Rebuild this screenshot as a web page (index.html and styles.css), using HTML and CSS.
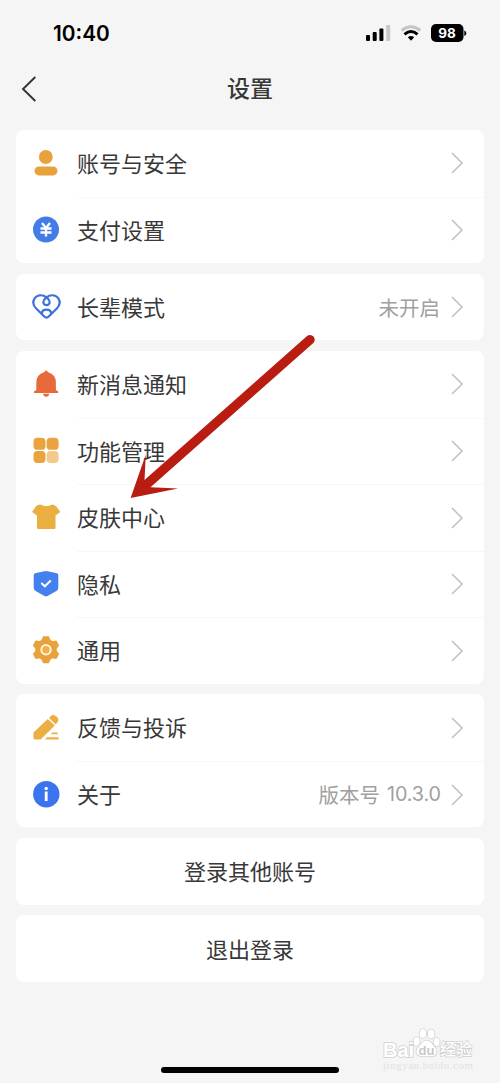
FILE: index.html
```html
<!DOCTYPE html>
<html lang="zh-CN">
<head>
<meta charset="utf-8">
<title>设置</title>
<link rel="stylesheet" href="styles.css">
</head>
<body>
<svg class="defs" width="0" height="0"><symbol id="chev" viewBox="0 0 14 24"><path d="M2 2l10 10L2 22" fill="none" stroke="#c0c0c0" stroke-width="1.5"/></symbol></svg>
<div class="screen">
<header class="status">
  <span class="time">10:40</span>
  <svg class="signals" width="102" height="20" viewBox="0 0 102 20">
    <rect x="1" y="11" width="4" height="6" rx="1"/><rect x="7.7" y="8" width="4" height="9" rx="1"/><rect x="14.4" y="4.5" width="4" height="12.5" rx="1"/><rect x="21.2" y="1" width="4" height="16" rx="1" fill="#c8c8c8"/>
    <path d="M36.700 6.500Q46 -1 55.300 6.500" fill="none" stroke="#c4c4c4" stroke-width="3"/>
    <path d="M39.500 10.400Q46 4.600 52.500 10.400" fill="none" stroke="#000" stroke-width="3"/>
    <path d="M42.800 13.300Q46 10.600 49.200 13.300L46 16.800Z"/>
    <rect x="66" y="0" width="32.500" height="18" rx="5"/><path d="M99.300 6.500q2 .5 2 2.700t-2 2.700z"/>
    <text x="82" y="14.200" class="battery">98</text>
  </svg>
</header>
<nav class="nav">
  <svg class="back" width="16" height="26" viewBox="0 0 16 26"><path d="M14.300 1L2 13l12.300 12" fill="none" stroke="#333" stroke-width="1.9"/></svg>
  <h1 class="title">设置</h1>
</nav>
<main class="cards">
  <section class="card">
    <div class="row">
      <svg class="icon" viewBox="0 0 28 28"><g fill="#e9a23b"><circle cx="13.800" cy="8" r="6.900"/><rect x="2.500" y="17.400" width="23" height="9" rx="4.400"/></g></svg>
      <div class="body"><span class="label">账号与安全</span><svg class="chev"><use href="#chev"/></svg></div>
    </div>
    <div class="row">
      <svg class="icon" viewBox="0 0 28 28"><circle cx="14" cy="13.500" r="13" fill="#437ce8"/><path d="M10 7l4 5 4-5M8.500 12.500h11M8.500 16.500h11M14 12v8.500" fill="none" stroke="#fff" stroke-width="2.300"/></svg>
      <div class="body"><span class="label">支付设置</span><svg class="chev"><use href="#chev"/></svg></div>
    </div>
  </section>
  <section class="card">
    <div class="row">
      <svg class="icon" viewBox="0 0 28 28"><g transform="translate(0 .6)" fill="none" stroke="#3b73d8" stroke-width="2.200"><path d="M14.500 3.800C11 .8 5.500.8 2.800 4.500.2 8.300 1.300 12 4.200 15l7.800 7.700q2.500 2.500 5 0l7.800-7.700c2.900-3 4-6.700 1.400-10.500C23.500.8 18 .8 14.500 3.800z"/><path d="M14.500 3.800C12.600 5.500 11.300 6.400 11.300 8.300a3.200 3.200 0 0 0 6.400 0c0-1.900-1.300-2.800-3.200-4.500zM9.700 20.400q.2-4.400 4.800-4.400t4.800 4.400"/></g></svg>
      <div class="body"><span class="label">长辈模式</span><span class="value">未开启</span><svg class="chev"><use href="#chev"/></svg></div>
    </div>
  </section>
  <section class="card">
    <div class="row">
      <svg class="icon" viewBox="0 0 28 28"><path d="M12 2.200q2-3.500 4.200 0 7.500 2.200 7.700 10V20l2.300 1.600v1.300H2v-1.300L4.300 20v-7.800Q4.500 4.400 12 2.200zM11 23.800h6.300q-.6 3-3.150 3T11 23.800z" fill="#e86a3a"/></svg>
      <div class="body"><span class="label">新消息通知</span><svg class="chev"><use href="#chev"/></svg></div>
    </div>
    <div class="row">
      <svg class="icon" viewBox="0 0 28 28"><g fill="#e9a33f"><rect x="1.500" y=".8" width="12" height="12" rx="3.900"/><rect x="14.600" y=".8" width="12" height="12" rx="3.900"/><rect x="1.500" y="13.900" width="12" height="12" rx="3.900"/><rect x="14.600" y="13.900" width="12" height="12" rx="3.900" fill="#f4c98a"/></g></svg>
      <div class="body"><span class="label">功能管理</span><svg class="chev"><use href="#chev"/></svg></div>
    </div>
    <div class="row">
      <svg class="icon" viewBox="0 0 28 28"><path d="M8.500 1.500Q14.500 5 20 1.500q3 .2 4.800 2.500l3.500 5-4.800 3.400V25q0 1-1 1H6q-1 0-1-1V12.400L0 9l3.600-5.200Q5.500 1.500 8.500 1.500z" fill="#ebae40"/></svg>
      <div class="body"><span class="label">皮肤中心</span><svg class="chev"><use href="#chev"/></svg></div>
    </div>
    <div class="row">
      <svg class="icon" viewBox="0 0 28 28"><path d="M12.500 1.300q1.500-.5 3 0L25 3.300q1.300.4 1.300 1.800v12.700q0 2.200-1.900 3.300L15.500 26q-1.500.8-3 0l-8.900-4.900q-1.900-1.100-1.900-3.300V5.100q0-1.400 1.300-1.800z" fill="#4480f0"/><path d="M9.300 13l3.500 3.300 6-5.800" fill="none" stroke="#fff" stroke-width="2"/></svg>
      <div class="body"><span class="label">隐私</span><svg class="chev"><use href="#chev"/></svg></div>
    </div>
    <div class="row">
      <svg class="icon" viewBox="0 0 28 28"><path d="M11.500 1h5l1.400 3.500 2.500 1.500 3.700-.7 2.200 4.200-2.300 2.800v2.900l2.300 2.800-2.200 4.200-3.700-.7-2.500 1.500-1.400 3.500h-5l-1.400-3.500-2.500-1.500-3.700.7-2.200-4.200L4 15.200v-2.900L1.700 9.500l2.200-4.200 3.700.7 2.500-1.500z" fill="#e9a23b" stroke="#e9a23b" stroke-width="1.500" stroke-linejoin="round"/><circle cx="14" cy="13.700" r="4.700" fill="#efb04b" stroke="#fff3dc" stroke-width="2"/></svg>
      <div class="body"><span class="label">通用</span><svg class="chev"><use href="#chev"/></svg></div>
    </div>
  </section>
  <section class="card">
    <div class="row">
      <svg class="icon" viewBox="0 0 28 28"><g fill="#ebaf44"><path d="M15.800 5l7 6.500L8.500 25.400H3q-1.500 0-1.500-1.500V18.500zM17 3.900l1.900-2q2.500-2.200 5.700.7t.7 6l-1.700 1.800z"/><path d="M20.500 18.500h5.200v1.800H18.800zM15 23.300h11.500v2.200H13z"/></g></svg>
      <div class="body"><span class="label">反馈与投诉</span><svg class="chev"><use href="#chev"/></svg></div>
    </div>
    <div class="row">
      <svg class="icon" viewBox="0 0 28 28"><circle cx="14.300" cy="14.200" r="13.200" fill="#3a75ef"/><circle cx="14.200" cy="8.500" r="1.700" fill="#fff"/><path d="M14.200 11.500V21" stroke="#fff" stroke-width="2.800"/></svg>
      <div class="body"><span class="label">关于</span><span class="value version"><span>版本号</span> <span class="num">10.3.0</span></span><svg class="chev"><use href="#chev"/></svg></div>
    </div>
  </section>
  <button class="card action">登录其他账号</button>
  <button class="card action">退出登录</button>
</main>
<div class="home"></div>
<svg class="arrow" width="200" height="180" viewBox="120 325 200 180"><path d="M130.600 498L145.800 454.500 144.500 480 306.800 336.300A4.700 4.700 0 0 1 313.300 343.100L150.500 487.200 178 488.600Z" fill="#b91c10"/></svg>
<svg class="watermark" width="110" height="56" viewBox="375 1020 110 56">
  <g class="wm-shape">
    <ellipse cx="416.500" cy="1041.500" rx="3" ry="4.200"/><ellipse cx="423" cy="1033.500" rx="3.200" ry="4.500"/><ellipse cx="431.200" cy="1034" rx="3.200" ry="4.500"/><ellipse cx="436.700" cy="1042" rx="3" ry="4.200"/>
    <path d="M427 1040.500c4 0 5 4 7.500 6.500 4 4 2 9.500-3 9.200h-9c-6 .3-8-5-4-9.200 3-3 4-6.500 8.500-6.500z"/>
    <text x="383" y="1056.500" class="wm-main" textLength="31">Bai</text><text x="440" y="1055" class="wm-cn" textLength="32">经验</text>
  </g>
  <text x="418.500" y="1055" class="wm-du">du</text>
  <text x="383" y="1069" class="wm-url" textLength="90">jingyan.baidu.com</text>
</svg>
</div>
</body>
</html>
```
FILE: styles.css
```css
* { box-sizing: border-box; }
body { margin: 0; background: #f5f5f5; color: #383838; font-family: "Liberation Sans", "Noto Sans CJK SC", sans-serif; }
.defs { position: absolute; }
.screen { position: relative; display: flex; flex-direction: column; width: 500px; height: 1083px; overflow: hidden; }
.status { display: flex; justify-content: space-between; align-items: center; height: 66px; padding: 0 33px 0 53px; }
.time { padding-top: 2px; font: 600 20.8px/24px Inter, sans-serif; color: #000; }
.signals { margin-top: 1px; }
.battery { font: 700 13.5px Inter, sans-serif; fill: #fff; text-anchor: middle; }
.nav { display: grid; grid-template-columns: 60px 1fr 60px; align-items: center; height: 64px; padding: 0 0 19px; }
.back { margin-left: 21px; }
.title { margin: 0; padding-bottom: 3px; text-align: center; font: 500 23px/34px "Noto Sans CJK SC", sans-serif; }
.cards { display: flex; flex-direction: column; gap: 10.8px; padding: 0 16px; }
.card { display: block; width: 100%; border: 0; border-radius: 8px; background: #fff; }
.row { display: flex; align-items: center; height: 66.5px; padding-left: 16px; }
.icon { width: 28px; height: 28px; margin-right: 17px; flex: none; overflow: visible; }
.body { flex: 1; display: flex; align-items: center; height: 100%; padding: 0 20px 0 0; }
.row + .row .body { border-top: 1px solid #f7f7f7; }
.label { flex: 1; padding-bottom: 3px; font: 400 22px/32px "Noto Sans CJK SC", sans-serif; }
.value { margin-right: 10px; padding-bottom: 1px; color: #a0a0a0; font: 400 20.5px/32px "Noto Sans CJK SC", sans-serif; }
.version { display: flex; gap: 7px; margin-right: 9px; }
.num { font-family: Inter, sans-serif; font-size: 19.8px; letter-spacing: -.1px; }
.chev { width: 14px; height: 24px; flex: none; }
.action { height: 66.5px; padding: 0 0 2px; color: #383838; font: 400 22px/32px "Noto Sans CJK SC", sans-serif; }
.home { width: 178px; height: 6.500px; margin: auto auto 10px; border-radius: 4px; background: #000; }
.arrow { position: absolute; left: 120px; top: 325px; }
.watermark { position: absolute; left: 375px; top: 1020px; }
.wm-shape { fill: #fff; stroke: #d0d0d0; stroke-width: 1.6; paint-order: stroke; }
.wm-main { font: 700 20px "Liberation Sans", sans-serif; }
.wm-cn { font: 500 16px "Noto Sans CJK SC", sans-serif; }
.wm-du { font: 700 13px "Liberation Sans", sans-serif; fill: #c8c8c8; }
.wm-url { font: 400 11px "Liberation Serif", serif; fill: #e2e2e2; }
```
